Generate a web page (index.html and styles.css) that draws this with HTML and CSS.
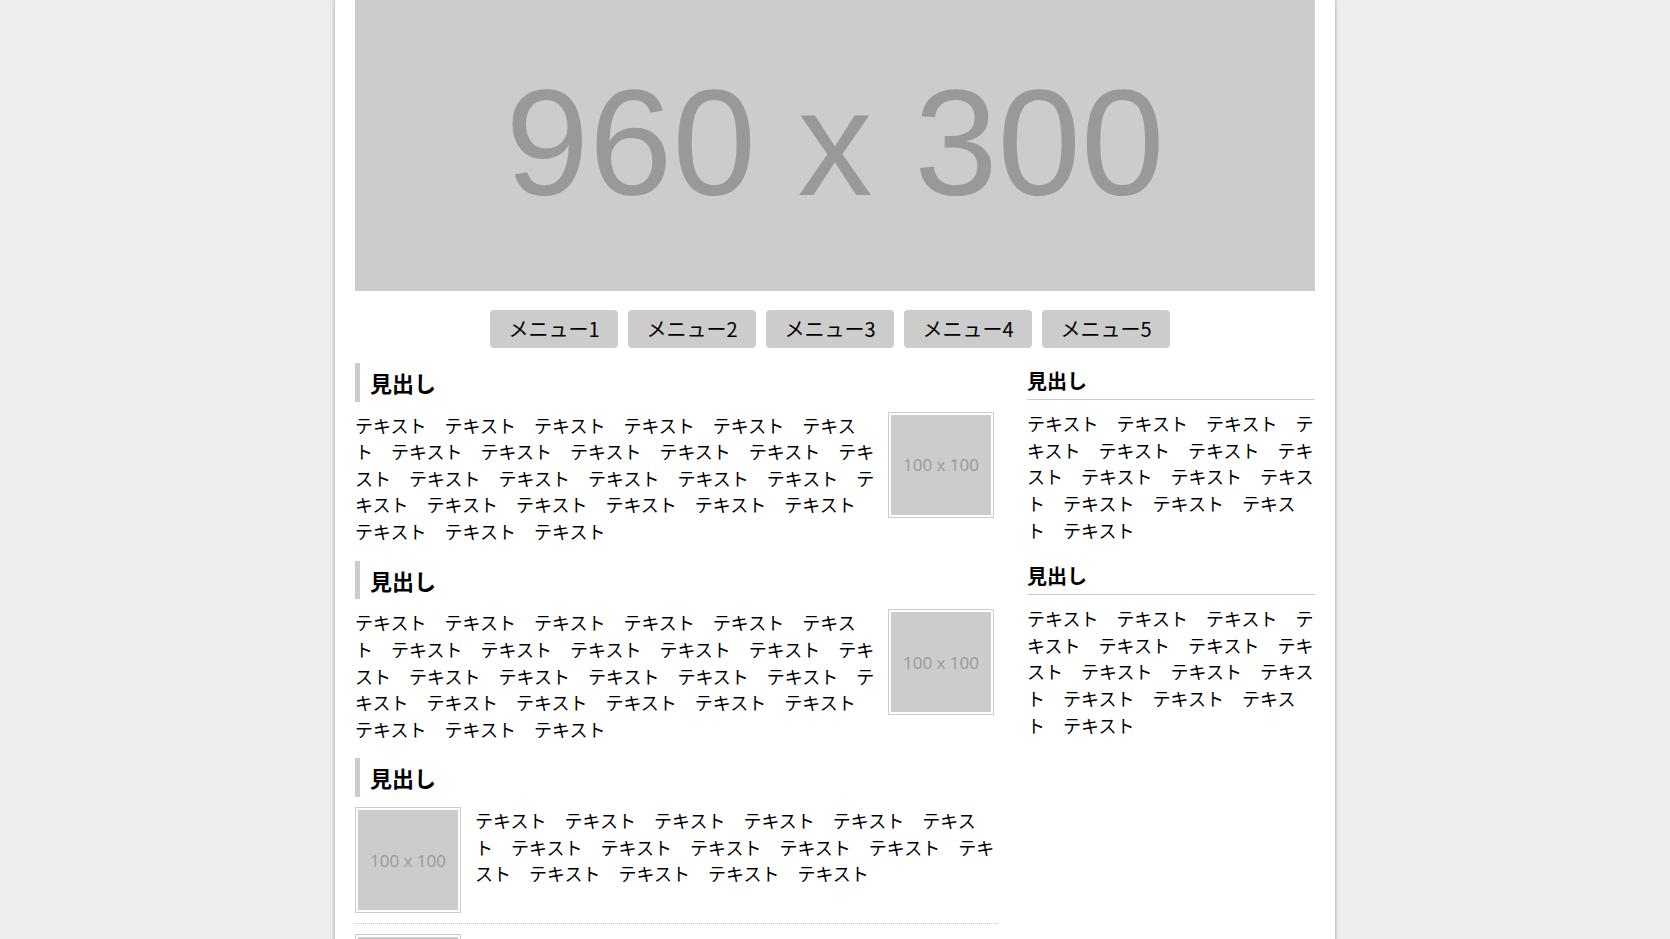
FILE: index.html
```html
<!DOCTYPE html>
<html lang="ja">
<head>
<meta charset="utf-8">
<title>サンプル</title>
<link rel="stylesheet" href="styles.css">
</head>
<body>
<div class="page">
  <header class="banner"><span class="banner-label">960 x 300</span></header>
  <nav class="gnav">
    <ul class="gnav-list">
      <li class="gnav-item"><a class="gnav-link" href="#">メニュー1</a></li>
      <li class="gnav-item"><a class="gnav-link" href="#">メニュー2</a></li>
      <li class="gnav-item"><a class="gnav-link" href="#">メニュー3</a></li>
      <li class="gnav-item"><a class="gnav-link" href="#">メニュー4</a></li>
      <li class="gnav-item"><a class="gnav-link" href="#">メニュー5</a></li>
    </ul>
  </nav>
  <div class="columns">
    <main class="main">
      <section class="section">
        <h2 class="section-title">見出し</h2>
        <div class="media">
          <div class="thumb thumb-right"><div class="thumb-img">100 x 100</div></div>
          <p class="text">テキスト　テキスト　テキスト　テキスト　テキスト　テキスト　テキスト　テキスト　テキスト　テキスト　テキスト　テキスト　テキスト　テキスト　テキスト　テキスト　テキスト　テキスト　テキスト　テキスト　テキスト　テキスト　テキスト　テキスト　テキスト　テキスト</p>
        </div>
      </section>
      <section class="section">
        <h2 class="section-title">見出し</h2>
        <div class="media">
          <div class="thumb thumb-right"><div class="thumb-img">100 x 100</div></div>
          <p class="text">テキスト　テキスト　テキスト　テキスト　テキスト　テキスト　テキスト　テキスト　テキスト　テキスト　テキスト　テキスト　テキスト　テキスト　テキスト　テキスト　テキスト　テキスト　テキスト　テキスト　テキスト　テキスト　テキスト　テキスト　テキスト　テキスト</p>
        </div>
      </section>
      <section class="section">
        <h2 class="section-title">見出し</h2>
        <ul class="entry-list">
          <li class="entry">
            <div class="thumb thumb-left"><div class="thumb-img">100 x 100</div></div>
            <p class="text">テキスト　テキスト　テキスト　テキスト　テキスト　テキスト　テキスト　テキスト　テキスト　テキスト　テキスト　テキスト　テキスト　テキスト　テキスト　テキスト</p>
          </li>
          <li class="entry">
            <div class="thumb thumb-left"><div class="thumb-img">100 x 100</div></div>
            <p class="text">テキスト　テキスト　テキスト　テキスト　テキスト　テキスト　テキスト　テキスト　テキスト　テキスト　テキスト　テキスト　テキスト　テキスト　テキスト　テキスト</p>
          </li>
        </ul>
      </section>
    </main>
    <aside class="side">
      <div class="widget">
        <h3 class="widget-title">見出し</h3>
        <p class="text">テキスト　テキスト　テキスト　テキスト　テキスト　テキスト　テキスト　テキスト　テキスト　テキスト　テキスト　テキスト　テキスト　テキスト</p>
      </div>
      <div class="widget">
        <h3 class="widget-title">見出し</h3>
        <p class="text">テキスト　テキスト　テキスト　テキスト　テキスト　テキスト　テキスト　テキスト　テキスト　テキスト　テキスト　テキスト　テキスト　テキスト</p>
      </div>
    </aside>
  </div>
</div>
</body>
</html>
```
FILE: styles.css
```css
html, body {
  margin: 0;
  padding: 0;
}

body {
  background: #ededed;
  color: #000;
  font-family: "Noto Sans CJK JP", "Noto Sans", sans-serif;
  font-size: 18px;
}

.page {
  width: 1000px;
  margin: 0 auto;
  padding: 0 20px 40px;
  box-sizing: border-box;
  background: #fff;
  box-shadow: 0 0 4px rgba(0, 0, 0, 0.35);
  min-height: 1200px;
}

.banner {
  height: 291px;
  padding-bottom: 6px;
  box-sizing: border-box;
  background: #ccc;
  display: flex;
  align-items: center;
  justify-content: center;
}

.banner-label {
  font-family: "Liberation Sans", Arial, sans-serif;
  font-size: 150px;
  line-height: 1;
  color: #999;
}

.gnav {
  margin: 19px 0 15px;
}

.gnav-list {
  list-style: none;
  margin: 0;
  padding: 0;
  display: flex;
  justify-content: center;
}

.gnav-item {
  margin-right: 10px;
}

.gnav-link {
  display: block;
  width: 128px;
  height: 38px;
  line-height: 38px;
  text-align: center;
  background: #ccc;
  border-radius: 4px;
  color: #000;
  text-decoration: none;
  font-size: 20px;
}

.columns {
  display: flex;
  justify-content: space-between;
  align-items: flex-start;
}

.main {
  width: 643px;
}

.side {
  width: 288px;
}

.section {
  margin-bottom: 16px;
}

.section-title {
  margin: 0 0 10px;
  padding: 5px 0 5px 10px;
  border-left: 5px solid #ccc;
  font-size: 22px;
  line-height: 1.3;
  font-weight: bold;
}

.text {
  margin: 0;
  font-size: 18px;
  line-height: 1.48;
  word-break: break-all;
  white-space: break-spaces;
}

.media {
  display: flow-root;
}

.thumb {
  padding: 2px;
  border: 1px solid #ccc;
  background: #fff;
}

.thumb-right {
  float: right;
  margin: 0 4px 0 10px;
}

.thumb-left {
  float: left;
  margin: 0 14px 0 0;
}

.thumb-img {
  width: 100px;
  height: 100px;
  background: #ccc;
  color: #999;
  font-family: "Open Sans", "Liberation Sans", sans-serif;
  font-size: 17px;
  display: flex;
  align-items: center;
  justify-content: center;
}

.entry-list {
  list-style: none;
  margin: 0;
  padding: 0;
}

.entry {
  display: flow-root;
  padding-bottom: 10px;
  border-bottom: 1px dotted #ccc;
}

.entry + .entry {
  padding-top: 10px;
}

.widget {
  margin-bottom: 15px;
}

.widget-title {
  margin: 0 0 10px;
  padding: 5px 0;
  border-bottom: 1px solid #ccc;
  font-size: 20px;
  line-height: 1.3;
  font-weight: bold;
}
```
